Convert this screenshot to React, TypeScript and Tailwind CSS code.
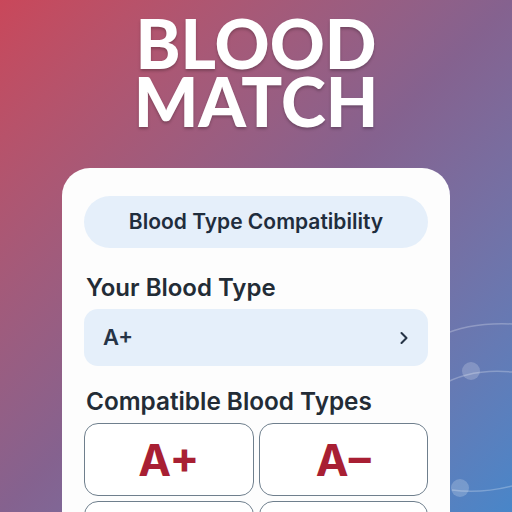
import { ChevronRight } from "lucide-react";

const compatible = ["A+", "A-", "O+", "O-"];

export default function App() {
  return (
    <div className="relative h-[512px] w-[512px] overflow-hidden bg-linear-to-br from-[#c9475a] via-[#85628f] to-[#4886c9] font-['Inter',sans-serif]">
      {/* decorative orbit lines */}
      <svg className="absolute inset-0" width="512" height="512" viewBox="0 0 512 512" fill="none">
        <path d="M440 336 Q470 322 512 324" stroke="#ffffff" strokeOpacity="0.25" strokeWidth="1.5" />
        <path d="M440 386 Q470 368 512 372" stroke="#ffffff" strokeOpacity="0.25" strokeWidth="1.5" />
        <path d="M452 490 Q480 494 512 486" stroke="#ffffff" strokeOpacity="0.25" strokeWidth="1.5" />
        <circle cx="471" cy="371" r="9" fill="#ffffff" fillOpacity="0.2" />
        <circle cx="460" cy="488" r="9" fill="#ffffff" fillOpacity="0.2" />
      </svg>

      <div className="relative flex h-full flex-col">
        <h1 className="pt-[14px] text-center font-['Lato',sans-serif] text-[68px] font-black leading-[58px] text-white [text-shadow:0_2px_3px_rgba(0,0,0,0.25)]">
          <span className="block">BLOOD</span>
          <span className="block">MATCH</span>
        </h1>

        <div className="mx-[62px] mt-[38px] flex-1 rounded-t-[28px] bg-[#fdfdfd] px-[22px] pt-[28px]">
          <div className="flex h-[52px] items-center justify-center rounded-[26px] bg-[#e5effa] text-[21px] font-semibold text-[#1f2d3d]">
            Blood Type Compatibility
          </div>

          <h2 className="mt-[25px] pl-[2px] text-[24px] font-semibold leading-[30px] text-[#232c36]">Your Blood Type</h2>

          <div className="mt-[6px] flex h-[57px] items-center justify-between rounded-[14px] bg-[#e5effa] pl-[19px] pr-[14px]">
            <span className="text-[22px] font-semibold text-[#263446]">A+</span>
            <ChevronRight className="h-[20px] w-[20px] text-[#263446]" strokeWidth={2.5} />
          </div>

          <h2 className="mt-[20px] pl-[2px] text-[24.3px] font-semibold leading-[30px] text-[#232c36]">Compatible Blood Types</h2>

          <div className="mt-[7px] grid grid-cols-2 gap-[5px]">
            {compatible.map((t) => (
              <div
                key={t}
                className="flex h-[73px] items-center justify-center rounded-[14px] border border-[#6f7f8d] bg-white text-[44px] font-bold text-[#a81f33]"
              >
                {t.replace("-", "–")}
              </div>
            ))}
          </div>
        </div>
      </div>
    </div>
  );
}
